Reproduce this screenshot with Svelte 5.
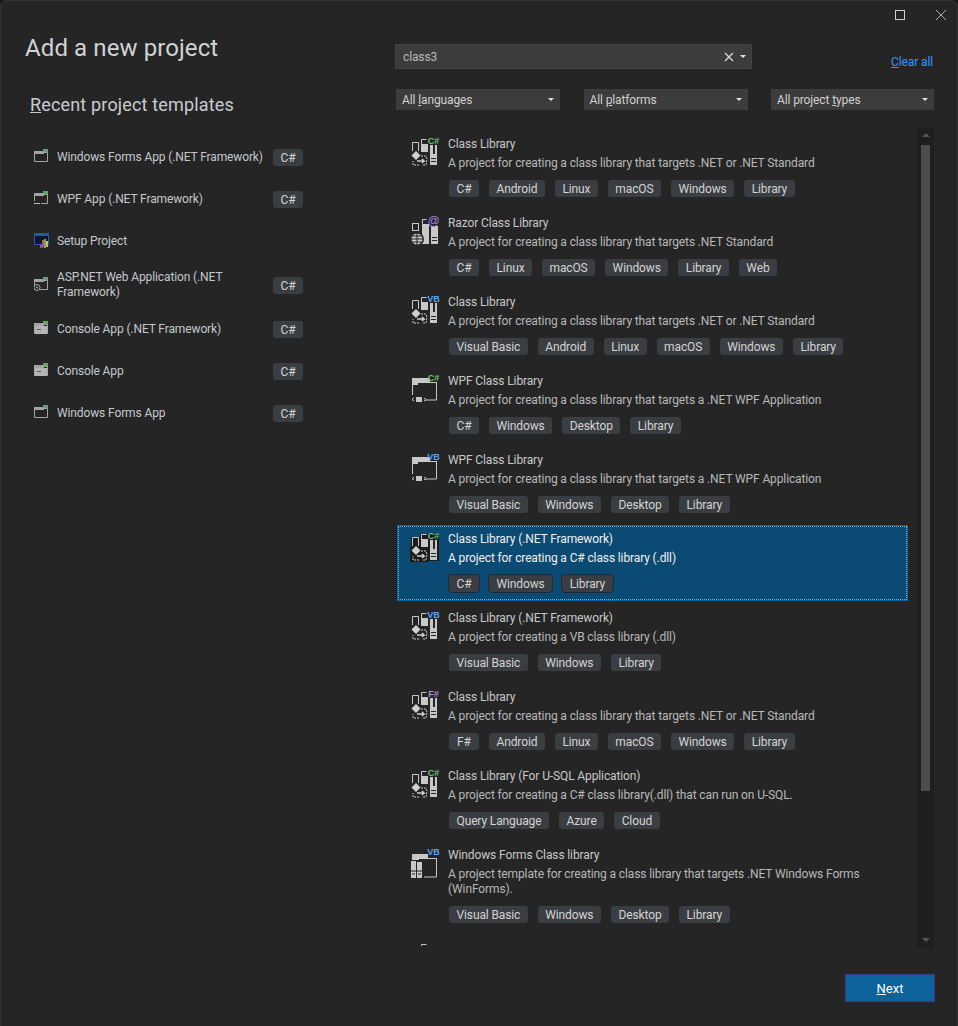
<script>
  let search = "class3";

  const recent = [
    { name: "Windows Forms App (.NET Framework)", icon: "forms", lang: "C#" },
    { name: "WPF App (.NET Framework)", icon: "wpf", lang: "C#" },
    { name: "Setup Project", icon: "setup", lang: null },
    { name: "ASP.NET Web Application (.NET Framework)", icon: "asp", lang: "C#" },
    { name: "Console App (.NET Framework)", icon: "console", lang: "C#" },
    { name: "Console App", icon: "console", lang: "C#" },
    { name: "Windows Forms App", icon: "forms", lang: "C#" },
  ];

  const netStd = "A project for creating a class library that targets .NET or .NET Standard";
  const wpfDesc = "A project for creating a class library that targets a .NET WPF Application";

  const templates = [
    { title: "Class Library", desc: netStd, icon: "lib", badge: "C#", tags: ["C#", "Android", "Linux", "macOS", "Windows", "Library"] },
    { title: "Razor Class Library", desc: "A project for creating a class library that targets .NET Standard", icon: "razor", badge: "@", tags: ["C#", "Linux", "macOS", "Windows", "Library", "Web"] },
    { title: "Class Library", desc: netStd, icon: "lib", badge: "VB", tags: ["Visual Basic", "Android", "Linux", "macOS", "Windows", "Library"] },
    { title: "WPF Class Library", desc: wpfDesc, icon: "wpf", badge: "C#", tags: ["C#", "Windows", "Desktop", "Library"] },
    { title: "WPF Class Library", desc: wpfDesc, icon: "wpf", badge: "VB", tags: ["Visual Basic", "Windows", "Desktop", "Library"] },
    { title: "Class Library (.NET Framework)", desc: "A project for creating a C# class library (.dll)", icon: "lib", badge: "C#", tags: ["C#", "Windows", "Library"], selected: true },
    { title: "Class Library (.NET Framework)", desc: "A project for creating a VB class library (.dll)", icon: "lib", badge: "VB", tags: ["Visual Basic", "Windows", "Library"] },
    { title: "Class Library", desc: netStd, icon: "lib", badge: "F#", tags: ["F#", "Android", "Linux", "macOS", "Windows", "Library"] },
    { title: "Class Library (For U-SQL Application)", desc: "A project for creating a C# class library(.dll) that can run on U-SQL.", icon: "lib", badge: "C#", tags: ["Query Language", "Azure", "Cloud"] },
    { title: "Windows Forms Class library", desc: "A project template for creating a class library that targets .NET Windows Forms (WinForms).", icon: "forms", badge: "VB", tags: ["Visual Basic", "Windows", "Desktop", "Library"] },
    { title: "", desc: "", icon: "lib", badge: "", tags: [] },
  ];

  const badgeColors = { "C#": "#6cc072", VB: "#55a5f0", "F#": "#b48ad8", "@": "#a77fe6" };
</script>

{#snippet smallIcon(kind)}
  <svg class="small-icon" width="16" height="16" viewBox="0 0 16 16">
    {#if kind === "setup"}
      <rect x="0" y="0" width="15" height="12" fill="#2a55a0" />
      <rect x="1" y="3" width="13" height="8" fill="#0e1730" />
      <rect x="8" y="7" width="2" height="7" fill="#d84b4b" />
      <rect x="10" y="6" width="2" height="9" fill="#5cb85c" />
      <rect x="12" y="8" width="2" height="6" fill="#d8b84b" />
      <rect x="6" y="11" width="3" height="4" fill="#7a54c8" />
    {:else}
      <path d="M.5 3.500h13v9H.5z" fill="none" stroke="#a4a4a4" />
      <rect x="0" y="2" width="10" height="3" fill="#a4a4a4" />
      {#if kind === "console"}
        <rect x="1" y="5" width="12" height="8" fill="#b4b4b4" />
        <rect x="3" y="8" width="4" height="1" fill="#555" />
      {/if}
      {#if kind === "wpf"}
        <rect x="0" y="10" width="7" height="4" fill="#252526" />
        <rect x="0" y="12" width="6" height="1" fill="#b8b8b8" />
      {/if}
      {#if kind === "asp"}
        <circle cx="3" cy="10.500" r="3" fill="#252526" stroke="#a4a4a4" />
        <circle cx="3" cy="10.500" r="1" fill="#a4a4a4" />
      {/if}
      <rect x="9" y="0" width="5" height="3" fill="#5fa85f" />
    {/if}
  </svg>
{/snippet}

{#snippet bigIcon(kind, badge, selected)}
  <svg class="big-icon" width="32" height="32" viewBox="0 0 32 32">
    {#if kind === "lib"}
      {#if selected}
        <path d="M1 6h9V3h19v27H1z" fill="#1c1c1c" />
      {/if}
      <path d="M2.500 15V6.500h6V15" fill="none" stroke="#c8c8c8" />
      <path d="M11.500 12V3.500h5" fill="none" stroke="#c8c8c8" />
      <rect x="11" y="8" width="7" height="21" fill="#c8c8c8" />
      <rect x="20" y="9" width="7" height="20" fill="#c8c8c8" />
      <rect x="23" y="9" width="2" height="9" fill="#252526" />
      <rect x="21" y="22" width="5" height="1" fill="#252526" />
      <rect x="21" y="25" width="5" height="1" fill="#252526" />
      <path d="M0 16h18v15H0z" fill={selected ? "#1c1c1c" : "#252526"} />
      <path d="M6 15l4.500 4.500L6 24l-4.500-4.500z" fill="#d0d0d0" />
      <path d="M11 20l5 0 1 3-1 6h-4m-3 0h-6v-4" fill="none" stroke="#c8c8c8" stroke-dasharray="2 1" />
      <path d="M7 25h7l-2-2m0 4l2-2" fill="none" stroke="#d0d0d0" stroke-width="1.500" />
    {:else if kind === "razor"}
      <rect x="2.500" y="8.500" width="6" height="7" fill="none" stroke="#c8c8c8" />
      <path d="M12.500 12V4.500h4" fill="none" stroke="#c8c8c8" />
      <rect x="12" y="9" width="7" height="20" fill="#c8c8c8" />
      <rect x="21" y="11" width="7" height="18" fill="#c8c8c8" />
      <rect x="22" y="22" width="5" height="1" fill="#252526" />
      <rect x="22" y="25" width="5" height="1" fill="#252526" />
      <circle cx="7" cy="24" r="7" fill="#252526" />
      <circle cx="7" cy="24" r="5.500" fill="#c8c8c8" />
      <path d="M7 18v12M1 24h12M2 21h10M2 27h10" stroke="#252526" />
    {:else if kind === "wpf"}
      <path d="M2 5h18v4h7v1H8v2H2z" fill="#c8c8c8" />
      <path d="M2.500 9v13M26.500 10v17H15" fill="none" stroke="#c8c8c8" />
      <rect x="6" y="24" width="6" height="5" fill="#c8c8c8" />
      <path d="M4 25l-2 1.500L4 28M14 25l2 1.500L14 28" fill="none" stroke="#c8c8c8" />
    {:else}
      <path d="M2 7h16v4h9v1H9v1H2z" fill="#c8c8c8" />
      <path d="M26.500 12v18H14" fill="none" stroke="#c8c8c8" />
      <rect x="1" y="14" width="5" height="17" fill="#c8c8c8" />
      <rect x="7" y="15" width="5" height="16" fill="#c8c8c8" />
      <path d="M1 24h5M7 24h5" stroke="#252526" />
      <path d="M2 27h3M8 27h3" stroke="#252526" />
    {/if}
    {#if badge}
      {#if badge === "@"}
        <text x="23.500" y="10" class="badge at" fill={badgeColors[badge]}>@</text>
      {:else}
        <text x="23.500" y="8" class="badge" fill={badgeColors[badge]}>{badge}</text>
      {/if}
    {/if}
  </svg>
{/snippet}

<div class="window">
  <header class="titlebar">
    <svg width="12" height="12" viewBox="0 0 12 12"><rect x="1.500" y="1.500" width="9" height="9" fill="none" stroke="#d0d0d0" /></svg>
    <svg width="12" height="12" viewBox="0 0 12 12"><path d="M1 1l10 10M11 1L1 11" stroke="#b0b0b0" /></svg>
  </header>

  <div class="columns">
    <aside class="left">
      <h1>Add a new project</h1>
      <h2><u>R</u>ecent project templates</h2>
      <ul class="recent">
        {#each recent as item}
          <li>
            {@render smallIcon(item.icon)}
            <span class="recent-name">{item.name}</span>
            {#if item.lang}<span class="tag">{item.lang}</span>{/if}
          </li>
        {/each}
      </ul>
    </aside>

    <section class="right">
      <div class="search-row">
        <div class="search">
          <input bind:value={search} spellcheck="false" />
          <svg width="10" height="10" viewBox="0 0 10 10"><path d="M1 1l8 8M9 1L1 9" stroke="#cfcfcf" stroke-width="1.500" /></svg>
          <span class="caret small"></span>
        </div>
        <a href="#clear" class="clear"><u>C</u>lear all</a>
      </div>

      <div class="filters">
        <div class="combo"><span>All <u>l</u>anguages</span><span class="caret"></span></div>
        <div class="combo"><span>All <u>p</u>latforms</span><span class="caret"></span></div>
        <div class="combo"><span>All project <u>t</u>ypes</span><span class="caret"></span></div>
      </div>

      <div class="results">
        <div class="list">
          {#each templates as t}
            <div class="row" class:selected={t.selected}>
              {@render bigIcon(t.icon, t.badge, t.selected)}
              <div class="row-body">
                <div class="row-title">{t.title}</div>
                <div class="row-desc">{t.desc}</div>
                <div class="tags">
                  {#each t.tags as tag}<span class="tag">{tag}</span>{/each}
                </div>
              </div>
            </div>
          {/each}
        </div>
        <div class="scrollbar">
          <span class="arrow up"></span>
          <div class="track"><div class="thumb"></div></div>
          <span class="arrow down"></span>
        </div>
      </div>

      <div class="actions">
        <button class="next"><u>N</u>ext</button>
      </div>
    </section>
  </div>
</div>

<style>
  :global(body) {
    margin: 0;
    background: #171717;
  }

  .window {
    box-sizing: border-box;
    width: 958px;
    height: 1026px;
    background: #252526;
    border: 1px solid #333337;
    border-bottom: 0;
    border-radius: 7px 7px 0 0;
    font-family: Roboto, "Noto Sans", sans-serif;
    font-size: 12px;
    letter-spacing: -0.12px;
    color: #c8c8c8;
    overflow: hidden;
  }

  .titlebar {
    display: flex;
    justify-content: flex-end;
    gap: 29px;
    height: 29px;
    padding: 8px 10px 0 0;
    box-sizing: border-box;
  }

  .columns {
    display: grid;
    grid-template-columns: 394px 1fr;
  }

  .left {
    padding-left: 24px;
  }

  h1 {
    margin: 3px 0 0;
    font-size: 24px;
    font-weight: 400;
    line-height: 30px;
    letter-spacing: 0.1px;
    color: #d0d3d6;
  }

  h2 {
    margin: 29px 0 0 5px;
    font-size: 18px;
    font-weight: 400;
    line-height: 26px;
    letter-spacing: 0.16px;
    color: #c8ccd0;
  }

  .recent {
    list-style: none;
    margin: 24px 0 0 9px;
    padding: 0;
    display: flex;
    flex-direction: column;
    gap: 12px;
    width: 269px;
  }

  .recent li {
    display: flex;
    align-items: center;
    min-height: 30px;
    padding: 2px 0;
    box-sizing: border-box;
  }

  .small-icon {
    flex: none;
    margin-right: 7px;
  }

  .recent-name {
    flex: 1;
    line-height: 15px;
    color: #c4c8cc;
  }

  .tag {
    flex: none;
    box-sizing: border-box;
    height: 17px;
    line-height: 18px;
    padding: 0 7.500px;
    min-width: 30px;
    text-align: center;
    background: #3a3d41;
    border-radius: 3px;
    color: #d4d4d4;
  }

  .right {
    padding-right: 23px;
  }

  .search-row {
    display: flex;
    align-items: flex-end;
    justify-content: space-between;
    margin-top: 14px;
  }

  .search {
    box-sizing: border-box;
    display: flex;
    align-items: center;
    width: 357px;
    height: 25px;
    background: #3c3c3c;
    border: 1px solid #434346;
    padding: 0 5px 0 7px;
  }

  .search input {
    flex: 1;
    min-width: 0;
    background: none;
    border: 0;
    outline: 0;
    padding: 0;
    font: inherit;
    letter-spacing: inherit;
    color: #b8b8b8;
  }

  .search svg {
    margin-right: 6px;
  }

  .clear {
    color: #3794ff;
    text-decoration: none;
    margin: 0 1px -1px 0;
    line-height: 16px;
  }

  .filters {
    display: grid;
    grid-template-columns: 164px 164px 163px;
    justify-content: space-between;
    margin: 20px 0 0 1px;
  }

  .combo {
    display: flex;
    align-items: center;
    justify-content: space-between;
    height: 21px;
    padding: 0 6px;
    background: #3c3c3c;
    color: #d0d0d0;
  }

  .caret {
    width: 0;
    height: 0;
    border: 3px solid transparent;
    border-top: 3px solid #e0e0e0;
    border-bottom: 0;
  }

  .results {
    display: flex;
    justify-content: space-between;
    height: 821px;
    margin-top: 18px;
  }

  .list {
    width: 511px;
    margin-left: 2px;
    padding-top: 2px;
    height: 816px;
    overflow: hidden;
    display: flex;
    flex-direction: column;
    gap: 3px;
  }

  .row {
    flex: none;
    box-sizing: border-box;
    display: flex;
    padding: 6px 8px 8px 12px;
    border: 1px solid transparent;
    color: #c8c8c8;
  }

  .row.selected {
    background: #0a4a73;
    border-color: #0e639c;
    outline: 1px dotted #7fb2d4;
    outline-offset: -2px;
  }

  .big-icon {
    flex: none;
    margin: -1px 6px 0 0;
  }

  .row-title {
    line-height: 16px;
    margin-top: -1px;
  }

  .row-desc {
    margin-top: 4px;
    line-height: 15px;
    min-height: 15px;
    color: #b8b8b8;
  }

  .selected .row-title,
  .selected .row-desc {
    color: #f0f0f0;
  }

  .tags {
    display: flex;
    gap: 10px;
    margin: 9px 0 0 1px;
    min-height: 17px;
  }

  .selected .tag {
    outline: 1px solid #1a2a38;
  }

  .badge {
    font-family: "Liberation Sans", sans-serif;
    font-size: 9px;
    font-weight: 700;
    text-anchor: middle;
  }

  .badge.at {
    font-size: 12px;
    font-weight: 400;
  }

  .scrollbar {
    width: 17px;
    background: #1f1f20;
    display: flex;
    flex-direction: column;
    align-items: center;
  }

  .arrow {
    flex: none;
    width: 0;
    height: 0;
    border: 4px solid transparent;
  }

  .arrow.up {
    border-bottom: 4px solid #555;
    border-top: 0;
    margin: 5px 0 8px;
  }

  .arrow.down {
    border-top: 4px solid #555;
    border-bottom: 0;
    margin: 4px 0 7px;
  }

  .track {
    flex: 1;
    width: 9px;
  }

  .thumb {
    width: 9px;
    height: 646px;
    background: #4d4d50;
  }

  .actions {
    display: flex;
    justify-content: flex-end;
    margin: 25px -1px 0 0;
  }

  .next {
    box-sizing: border-box;
    width: 90px;
    height: 28px;
    background: #0e639c;
    border: 1px solid #3f3a8c;
    color: #fff;
    font: inherit;
    font-size: 13px;
    padding: 0;
  }
</style>
